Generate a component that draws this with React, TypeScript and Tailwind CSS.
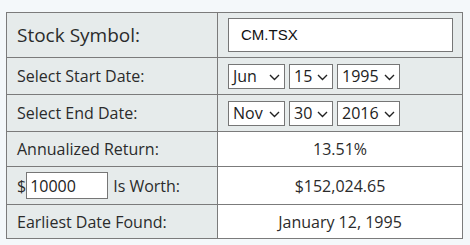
const cell = 'border border-[#7b7b7b] px-[10px]';

function Picker({ value, width }: { value: string; width: string }) {
  return (
    <div className={`relative inline-flex items-center h-[25px] border border-[#767676] bg-white ${width}`}>
      <span className="pl-[4px] text-[16px] leading-none text-[#222]">{value}</span>
      <svg className="absolute right-[4px] top-[9px] pointer-events-none" width="11" height="7" viewBox="0 0 11 7">
        <path d="M1 1l4.5 4.5L10 1" fill="none" stroke="#222" strokeWidth="1.4" />
      </svg>
    </div>
  );
}

export default function App() {
  return (
    <div className="w-[470px] h-[245px] bg-[#f4f8fa] pt-[12px] pl-[6px]" style={{ fontFamily: '"Open Sans", sans-serif' }}>
      <table className="table-fixed w-[457px] border-collapse text-[#2b2b2b] text-[16px]">
        <tbody>
          <tr className="bg-[#e6ebeb]">
            <td className={`${cell} w-[211px] h-[45px] text-[19px]`}>Stock Symbol:</td>
            <td className={cell}>
              <div className="flex items-center h-[34px] w-[225px] border border-[#767676] bg-white pl-[12px] text-[15px] text-[#111]" style={{ fontFamily: '"Liberation Sans", Arial, sans-serif' }}>
                CM.TSX
              </div>
            </td>
          </tr>
          <tr className="bg-[#e6ebeb]">
            <td className={`${cell} h-[37px]`}>Select Start Date:</td>
            <td className={cell}>
              <div className="flex gap-[4px]">
                <Picker value="Jun" width="w-[57px]" />
                <Picker value="15" width="w-[44px]" />
                <Picker value="1995" width="w-[63px]" />
              </div>
            </td>
          </tr>
          <tr className="bg-[#e6ebeb]">
            <td className={`${cell} h-[37px]`}>Select End Date:</td>
            <td className={cell}>
              <div className="flex gap-[4px]">
                <Picker value="Nov" width="w-[57px]" />
                <Picker value="30" width="w-[44px]" />
                <Picker value="2016" width="w-[63px]" />
              </div>
            </td>
          </tr>
          <tr>
            <td className={`${cell} h-[35px] bg-[#e6ebeb]`}>Annualized Return:</td>
            <td className={`${cell} bg-white text-center`}>13.51%</td>
          </tr>
          <tr>
            <td className={`${cell} h-[38px] bg-[#e6ebeb]`}>
              <div className="flex items-center">
                <span>$</span>
                <div className="flex items-center h-[27px] w-[82px] border border-[#767676] bg-white pl-[3px] text-[16px] text-[#222]">10000</div>
                <span className="ml-[5px]">Is Worth:</span>
              </div>
            </td>
            <td className={`${cell} bg-white text-center`}>$152,024.65</td>
          </tr>
          <tr>
            <td className={`${cell} h-[34px] bg-[#e6ebeb]`}>Earliest Date Found:</td>
            <td className={`${cell} bg-white text-center`}>January 12, 1995</td>
          </tr>
        </tbody>
      </table>
    </div>
  );
}
